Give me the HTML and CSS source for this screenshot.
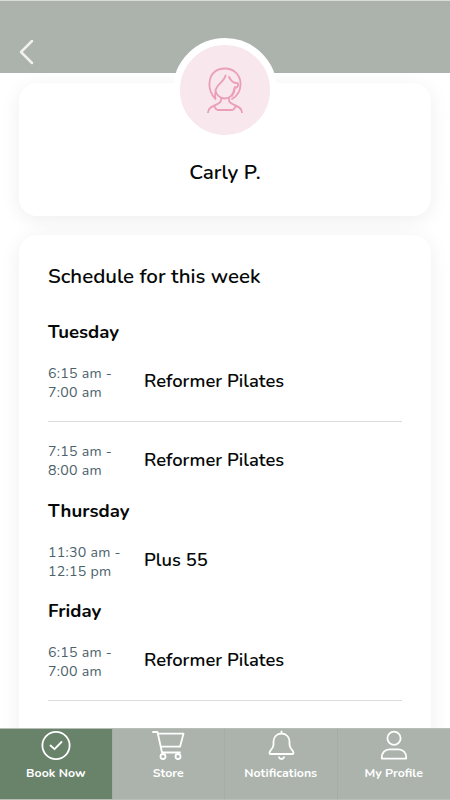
FILE: index.html
```html
<!DOCTYPE html>
<html lang="en">
<head>
<meta charset="utf-8">
<title>Carly P.</title>
<link rel="stylesheet" href="styles.css">
</head>
<body>
<div class="screen">
  <header class="header">
    <svg class="back" viewBox="0 0 15 26"><path d="M13 2 2 13 13 24"/></svg>
  </header>
  <main class="content">
    <section class="card profile">
      <div class="avatar">
        <svg viewBox="0 0 36 46"><path d="M8.500 32C4 28 2 21 2.500 16 3 6 10 1.500 18 1.500S33 7 33.500 16c.3 7-3 13-8.500 16M8.500 32c-1-6-.5-9 1.500-12 3-4.500 7.500-6.500 8.500-11.500M8.500 22.500c0 5 4.500 9 9.500 9s8.500-4.500 9.500-10.500c3 0 4.500-3 3-5-4 .5-6.500-2-8.500-6M28 20c0 4-1 6-3 9M14 31.500v2c-1 5.500-13 4-13 12M22 31.500v2c1 5.500 13 4 13 12M6.500 39c1.500 0 2 4 4 4h15c2 0 2.500-4 4-4"/></svg>
      </div>
      <h1 class="name">Carly P.</h1>
    </section>
    <section class="card schedule">
      <h2 class="title">Schedule for this week</h2>
      <h3 class="day">Tuesday</h3>
      <div class="row divided"><div class="time">6:15 am -<br>7:00 am</div><div class="class-name">Reformer Pilates</div></div>
      <div class="row"><div class="time">7:15 am -<br>8:00 am</div><div class="class-name">Reformer Pilates</div></div>
      <h3 class="day">Thursday</h3>
      <div class="row"><div class="time">11:30 am -<br>12:15 pm</div><div class="class-name">Plus 55</div></div>
      <h3 class="day">Friday</h3>
      <div class="row divided"><div class="time">6:15 am -<br>7:00 am</div><div class="class-name">Reformer Pilates</div></div>
    </section>
  </main>
  <nav class="tabs">
    <a class="tab active"><svg viewBox="0 0 34 30"><circle cx="17" cy="15.500" r="13.600"/><path d="m11.500 15.500 4 3.700 7-7.200"/></svg><span>Book Now</span></a>
    <a class="tab"><svg viewBox="0 0 34 30"><path d="M2 2h4.500L11 22.500h18M7 3.700h25.500l-3.500 13H10"/><circle cx="12" cy="26.500" r="2.500"/><circle cx="27" cy="26.500" r="2.500"/></svg><span>Store</span></a>
    <a class="tab"><svg viewBox="0 0 34 30"><path d="M17.500 1.500v2M17.500 3.500c-5 0-8 4-8 8v3c0 5-4 5-4 8.500 0 .7.300 1 1 1h22c.7 0 1-.3 1-1 0-3.500-4-3.500-4-8.500v-3c0-4-3-8-8-8ZM15 27.200c.6 2.400 4.400 2.400 5 0"/></svg><span>Notifications</span></a>
    <a class="tab"><svg viewBox="0 0 34 30"><circle cx="17" cy="8.200" r="6.600"/><path d="M4.800 28.600v-1.300c0-4.500 3.200-8 7.700-8h9c4.500 0 7.700 3.500 7.700 8v1.300Z"/></svg><span>My Profile</span></a>
  </nav>
</div>
</body>
</html>
```

FILE: styles.css
```css
* { box-sizing: border-box; }
body { margin: 0; background: #fff; font-family: Nunito, Lato, "Open Sans", sans-serif; color: #050807; }
h1, h2, h3 { margin: 0; }
svg { fill: none; stroke: currentColor; stroke-linecap: round; stroke-linejoin: round; }
.screen { height: 800px; display: flex; flex-direction: column; overflow: hidden; }
.header { flex: none; height: 73px; padding: 38px 0 0 19px; background: #abb3ac; border-top: 1px solid #d9dcd9; color: #f0f1f0; }
.back { display: block; width: 15px; height: 26px; stroke-width: 2.5; }
.content { flex: 1; min-height: 0; padding: 10px 19px 0; display: flex; flex-direction: column; gap: 19px; }
.card { background: #fff; border-radius: 18px; box-shadow: 0 4px 20px rgba(0, 0, 0, .07); }
.profile { flex: none; height: 133px; display: flex; flex-direction: column; align-items: center; }
.avatar { flex: none; width: 104px; height: 104px; margin-top: -45px; border: 7px solid #fff; border-radius: 50%; background: #f8e7ed; color: #eb9eb8; display: flex; align-items: center; justify-content: center; }
.avatar svg { width: 36px; height: 46px; stroke-width: 1.8; }
.name { margin-top: 17px; font-size: 20.6px; line-height: 26px; font-weight: 600; }
.schedule { flex: none; height: 600px; padding: 27px 29px; }
.title { font-size: 20.5px; line-height: 28px; font-weight: 600; margin-bottom: 31px; }
.day { height: 22.5px; font-size: 18.6px; line-height: 22px; font-weight: 700; }
.row { height: 78px; display: grid; grid-template-columns: 96px 1fr; align-items: center; }
.divided { border-bottom: 1px solid #d9dddc; }
.time { font-size: 14.2px; line-height: 19px; letter-spacing: .25px; color: #4c626b; white-space: nowrap; padding-top: 1px; }
.class-name { font-size: 18.4px; line-height: 24px; font-weight: 600; padding-bottom: 2px; }
.tabs { flex: none; height: 72px; display: grid; grid-template-columns: repeat(4, 1fr); background: #abb3ac; color: #fff; }
.tab { display: flex; flex-direction: column; align-items: center; padding-top: 1px; border-top: 1px solid #b7beb7; border-right: 1px solid #a5aea6; border-bottom: 1px solid #b7beb7; font-size: 12.35px; line-height: 16px; font-weight: 700; }
.tab:last-child { border-right: 0; }
.active { background: #69836b; }
.tab svg { width: 34px; height: 30px; margin-bottom: 5px; stroke-width: 1.8; }
```
